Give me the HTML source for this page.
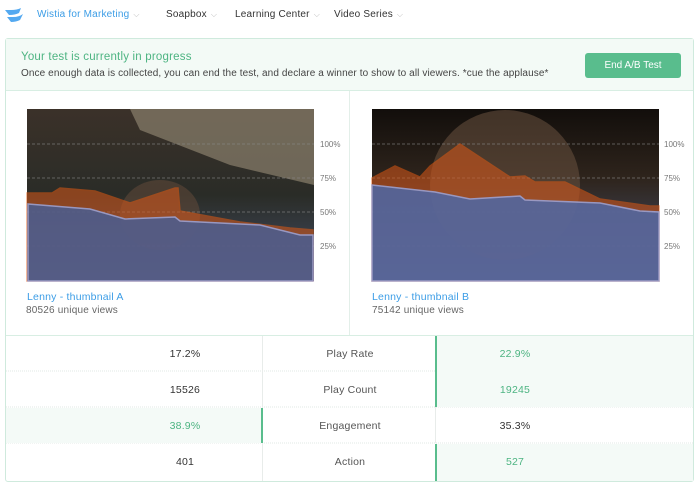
<!DOCTYPE html>
<html><head><meta charset="utf-8"><style>
*{margin:0;padding:0;box-sizing:border-box}
body{width:700px;height:488px;background:#fff;font-family:"Liberation Sans",sans-serif;position:relative;overflow:hidden;color:#333}
.nav{position:absolute;top:9px;font-size:10px;color:#333;letter-spacing:.2px}
.nav span{color:#bbb;font-size:8px;margin-left:4px}
.panel{position:absolute;left:5px;top:38px;width:689px;height:444px;border:1px solid #cfeadd;border-radius:3px}
.hdr{position:absolute;left:0;top:0;width:687px;height:52px;background:#f3faf6;border-bottom:1px solid #d8eee3}
.t1{position:absolute;left:15px;top:12px;font-size:11.5px;color:#4db482;letter-spacing:.2px}
.t2{position:absolute;left:15px;top:29px;font-size:10px;color:#444;letter-spacing:.1px}
.btn{position:absolute;left:579px;top:14px;width:96px;height:25px;background:#59bd8d;border-radius:3px;color:#fff;font-size:10px;text-align:center;line-height:25px}
.name{position:absolute;font-size:10.5px;color:#3c9de6;letter-spacing:.2px}
.views{position:absolute;font-size:10px;color:#666;letter-spacing:.2px}
.cell{position:absolute;font-size:10.5px;text-align:center;line-height:36px;height:36px;letter-spacing:.2px}
.g{color:#4db482}
.hl{background:#f4faf7}
</style></head><body>
<svg style="position:absolute;left:5px;top:8px" width="20" height="14" viewBox="0 0 20 14"><path d="M0 2 L6 2 Q12 2 16 0 L14 5 Q10 7 4 7Z" fill="#54a9f0"/><path d="M2 9 L8 9 Q14 9 18 6 L15 12 Q11 14 6 14Z" fill="#54a9f0"/></svg>
<div class="nav" style="left:37px;color:#3c9de6">Wistia for Marketing<span>⌵</span></div>
<div class="nav" style="left:166px">Soapbox<span>⌵</span></div>
<div class="nav" style="left:235px">Learning Center<span>⌵</span></div>
<div class="nav" style="left:334px">Video Series<span>⌵</span></div>
<div class="panel">
<div class="hdr"><div class="t1">Your test is currently in progress</div><div class="t2">Once enough data is collected, you can end the test, and declare a winner to show to all viewers. *cue the applause*</div><div class="btn">End A/B Test</div></div>
</div>
<div style="position:absolute;left:349px;top:91px;width:1px;height:245px;background:#e3efe9"></div>
<div style="position:absolute;left:6px;top:335px;width:687px;height:1px;background:#d8eee3"></div>
<svg style="position:absolute;left:0;top:0" width="700" height="488">
<defs>
<linearGradient id="ga" x1="0" y1="0" x2="0" y2="1"><stop offset="0" stop-color="#3b3129"/><stop offset=".5" stop-color="#2a2c27"/><stop offset="1" stop-color="#45506a"/></linearGradient>
<linearGradient id="gb" x1="0" y1="0" x2="0" y2="1"><stop offset="0" stop-color="#120e0b"/><stop offset=".4" stop-color="#2e241c"/><stop offset="1" stop-color="#4a5878"/></linearGradient>
</defs>
<rect x="27" y="109" width="287" height="172" fill="url(#ga)"/>
<path d="M130 109 L314 109 L314 185 L230 165 L140 130Z" fill="#8a806c" opacity=".7"/>
<ellipse cx="160" cy="215" rx="40" ry="35" fill="#5e4838" opacity=".6"/>
<rect x="372" y="109" width="287" height="172" fill="url(#gb)"/>
<ellipse cx="505" cy="185" rx="75" ry="75" fill="#6a5240" opacity=".55"/>
<g stroke="#888" stroke-dasharray="3,2" stroke-width=".7" opacity=".8">
<line x1="27" y1="144" x2="314" y2="144"/><line x1="27" y1="178" x2="314" y2="178"/><line x1="27" y1="212" x2="314" y2="212"/><line x1="27" y1="246" x2="314" y2="246"/>
<line x1="372" y1="144" x2="659" y2="144"/><line x1="372" y1="178" x2="659" y2="178"/><line x1="372" y1="212" x2="659" y2="212"/><line x1="372" y1="246" x2="659" y2="246"/>
</g>
<path d="M27 193 L52 193 L60 188 L95 191 L130 203 L175 188 L178 188 L180 211 L240 222 L290 228 L313 230 L313 281 L27 281Z" fill="#d9581a" opacity=".55" stroke="#e35a12" stroke-width="1.5"/>
<path d="M28 204 L90 209 L125 219 L175 217 L180 221 L260 225 L300 235 L313 235 L313 281 L28 281Z" fill="#4a5e92" opacity=".85" stroke="#9aa6dc" stroke-width="1.5"/>
<path d="M372 178 L395 166 L420 177 L430 166 L460 144 L510 177 L525 176 L535 182 L565 182 L600 199 L650 206 L659 206 L659 281 L372 281Z" fill="#d9581a" opacity=".55" stroke="#e35a12" stroke-width="1.5"/>
<path d="M372 185 L435 192 L470 199 L520 196 L525 200 L600 203 L640 211 L659 212 L659 281 L372 281Z" fill="#4e68a6" opacity=".85" stroke="#9aa6dc" stroke-width="1.5"/>
<g font-family="Liberation Sans" font-size="8" fill="#777">
<text x="320" y="147">100%</text><text x="320" y="181">75%</text><text x="320" y="215">50%</text><text x="320" y="249">25%</text>
<text x="664" y="147">100%</text><text x="664" y="181">75%</text><text x="664" y="215">50%</text><text x="664" y="249">25%</text>
</g>
<g stroke="#e0e8e4" stroke-dasharray="1,1"><line x1="6" y1="371" x2="693" y2="371"/><line x1="6" y1="407" x2="693" y2="407"/><line x1="6" y1="443" x2="693" y2="443"/></g>
</svg>
<div class="name" style="left:27px;top:291px">Lenny - thumbnail A</div>
<div class="views" style="left:26px;top:305px">80526 unique views</div>
<div class="name" style="left:372px;top:291px">Lenny - thumbnail B</div>
<div class="views" style="left:372px;top:305px">75142 unique views</div>
<div class="hl" style="position:absolute;left:437px;top:336px;width:256px;height:71px"></div>
<div class="hl" style="position:absolute;left:6px;top:408px;width:256px;height:35px"></div>
<div class="hl" style="position:absolute;left:437px;top:444px;width:256px;height:37px"></div>
<div style="position:absolute;left:262px;top:336px;width:1px;height:145px;background:#e8ecea"></div>
<div style="position:absolute;left:435px;top:336px;width:2px;height:71px;background:#59bd8d"></div>
<div style="position:absolute;left:435px;top:407px;width:1px;height:36px;background:#e8ecea"></div>
<div style="position:absolute;left:435px;top:444px;width:2px;height:37px;background:#59bd8d"></div>
<div style="position:absolute;left:261px;top:408px;width:2px;height:35px;background:#59bd8d"></div>
<div class="cell" style="left:150px;width:70px;top:336px">17.2%</div>
<div class="cell" style="left:315px;width:70px;top:336px;color:#555">Play Rate</div>
<div class="cell g" style="left:480px;width:70px;top:336px">22.9%</div>
<div class="cell" style="left:150px;width:70px;top:372px">15526</div>
<div class="cell" style="left:305px;width:90px;top:372px;color:#555">Play Count</div>
<div class="cell g" style="left:480px;width:70px;top:372px">19245</div>
<div class="cell g" style="left:150px;width:70px;top:408px">38.9%</div>
<div class="cell" style="left:305px;width:90px;top:408px;color:#555">Engagement</div>
<div class="cell" style="left:480px;width:70px;top:408px">35.3%</div>
<div class="cell" style="left:150px;width:70px;top:444px">401</div>
<div class="cell" style="left:315px;width:70px;top:444px;color:#555">Action</div>
<div class="cell g" style="left:480px;width:70px;top:444px">527</div>
</body></html>
